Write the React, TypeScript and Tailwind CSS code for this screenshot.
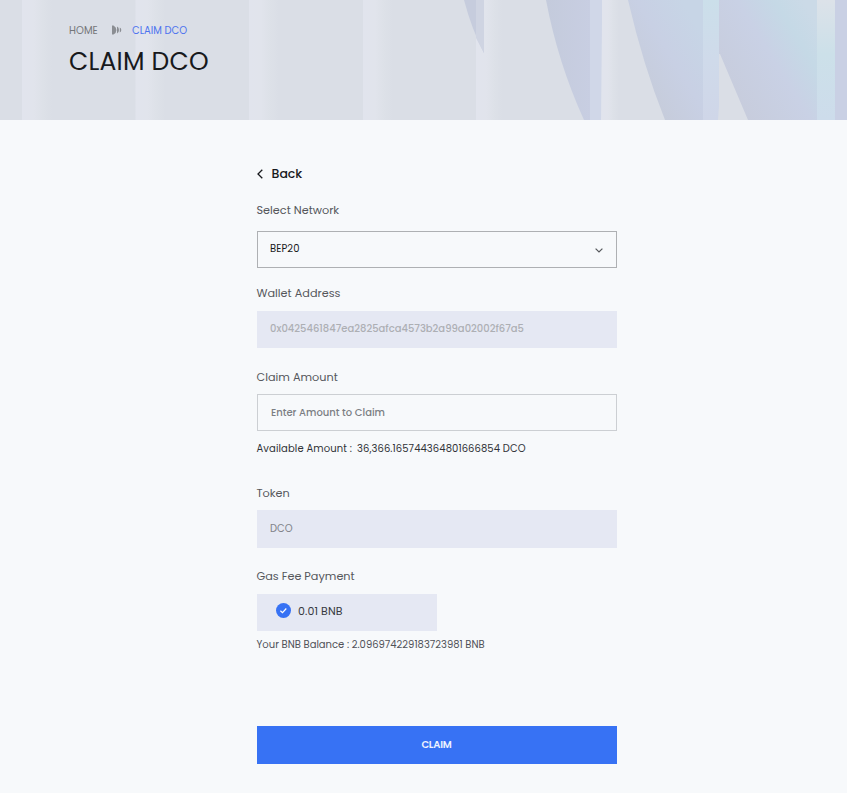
import React from "react";

const stripes = [22, 135.5, 249, 363];

function Backdrop() {
  return (
    <svg className="absolute inset-0 h-full w-full" viewBox="0 0 847 120" preserveAspectRatio="none" aria-hidden="true">
      <defs>
        <linearGradient id="stripe">
          <stop offset="0" stopColor="#e1e4ed" />
          <stop offset="0.4" stopColor="#e1e4ec" />
          <stop offset="0.7" stopColor="#dde1e8" />
          <stop offset="1" stopColor="#dadee6" />
        </linearGradient>
        <linearGradient id="fin1"><stop offset="0" stopColor="#c4cbdc" /><stop offset="1" stopColor="#c8cee2" /></linearGradient>
        <linearGradient id="fin2" gradientUnits="userSpaceOnUse" x1="640" y1="80" x2="706" y2="40">
          <stop offset="0" stopColor="#c6ccdb" /><stop offset="0.5" stopColor="#c8d0e4" /><stop offset="1" stopColor="#c7d5e6" />
        </linearGradient>
        <linearGradient id="fin3" gradientUnits="userSpaceOnUse" x1="725" y1="90" x2="822" y2="30">
          <stop offset="0" stopColor="#c7ccdc" /><stop offset="0.5" stopColor="#c9d1e5" /><stop offset="0.78" stopColor="#c5d9e6" /><stop offset="1" stopColor="#cbdae7" />
        </linearGradient>
        <linearGradient id="edge" x1="0" y1="0" x2="0" y2="1"><stop offset="0" stopColor="#cbdfea" /><stop offset="0.5" stopColor="#cfdaea" /><stop offset="1" stopColor="#cfd6e8" /></linearGradient>
        <linearGradient id="glow" x1="0" y1="0" x2="0" y2="1"><stop offset="0" stopColor="#dce2e9" /><stop offset="0.45" stopColor="#cce0e9" /><stop offset="1" stopColor="#cddceb" /></linearGradient>
      </defs>
      <rect width="847" height="120" fill="#dadee6" />
      {stripes.map((x) => <rect key={x} x={x} width="30" height="120" fill="url(#stripe)" />)}
      <rect x="476" width="26" height="120" fill="url(#stripe)" />
      <rect x="601" width="18" height="120" fill="url(#stripe)" />
      <path d="M464 0H484V53Q472 30 464 0Z" fill="#c6ccdd" />
      <path d="M476 0H484V53L476 38Z" fill="#cfd4e2" />
      <path d="M546 0H591V120H584Q558 63 546 0Z" fill="url(#fin1)" />
      <path d="M590 0H602V22L601 120H590Z" fill="#d0d7e8" />
      <path d="M628 0H705V120H665Q643 65 628 0Z" fill="url(#fin2)" />
      <path d="M703 0H719V106L718 120H703Z" fill="url(#edge)" />
      <path d="M719 0H820V120H748L720 54L719 54Z" fill="url(#fin3)" />
      <path d="M817 0H836V120H817Z" fill="url(#glow)" />
      <path d="M835 0H847V120H835Z" fill="#c9d0e4" />
    </svg>
  );
}

function Label({ children, className }: { children: React.ReactNode; className: string }) {
  return <label className={`-ml-[0.5px] block h-5 whitespace-nowrap text-[11.25px] leading-5 text-[#55575b] ${className}`}>{children}</label>;
}

export default function App() {
  return (
    <div className="h-[793px] w-full overflow-hidden bg-[#f7f9fb] font-['Poppins','Inter',sans-serif] text-[#17191c]">
      <header className="relative h-[120px] overflow-hidden">
        <Backdrop />
        <div className="relative pl-[69px] pt-[23px]">
          <nav className="flex h-4 items-center whitespace-nowrap text-[10px] leading-4">
            <span className="w-[43px] tracking-[0.05px] text-[#747679]">HOME</span>
            <svg className="-mt-[3px] mr-[10px]" width="10" height="10" viewBox="0 0 10 10" fill="#8b8e93">
              <path d="M0 0.5H1.5Q4.4 2 4.4 5T1.5 9.5H0ZM5 1.5Q7 2.4 7 5T5 8.5ZM7.8 2.5Q9.3 3.4 9.3 5T7.8 7.5Z" />
            </svg>
            <span className="text-[#4d73ef]">CLAIM DCO</span>
          </nav>
          <h1 className="mt-[5px] whitespace-nowrap text-[25px] leading-9 tracking-[0.2px]">CLAIM DCO</h1>
        </div>
      </header>

      <main className="ml-[257px] flex w-[360px] flex-col pt-[42px]">
        <button className="flex h-6 items-center text-left text-[12.5px] font-medium leading-6">
          <svg className="mr-[8.5px]" width="6" height="10" viewBox="0 0 6 10" fill="none" stroke="currentColor" strokeWidth="1.3"><path d="M5.3 0.7L1 5L5.3 9.3" /></svg>
          <span>Back</span>
        </button>

        <Label className="mt-[14px]">Select Network</Label>
        <div className="mt-[11px] flex h-[37px] items-center justify-between border border-[#aeb0b3] pl-3 pr-[13px] text-[10px]">
          <span className="-mt-[2px] tracking-[0.1px]">BEP20</span>
          <svg className="mt-[2px]" width="8" height="5" viewBox="0 0 8 5" fill="none" stroke="#56585c" strokeWidth="1.2"><path d="M0.6 0.6L4 4L7.4 0.6" /></svg>
        </div>

        <Label className="mt-[15px]">Wallet Address</Label>
        <div className="mt-2 flex h-[37px] items-center whitespace-nowrap bg-[#e5e8f3] pl-[13px] text-[10px] font-medium text-[#adafb4]">
          <span className="-mt-[2px]">0x0425461847ea2825afca4573b2a99a02002f67a5</span>
        </div>

        <Label className="mt-[19px]">Claim Amount</Label>
        <input
          aria-label="Claim Amount"
          placeholder="Enter Amount to Claim"
          className="mt-[7px] h-[37px] w-full border border-[#cccfd3] bg-transparent pl-[13px] text-[10px] font-medium placeholder:text-[#7b7e83] focus:outline-none"
        />
        <p className="-ml-[0.5px] mt-2 flex h-5 gap-[5px] whitespace-nowrap text-[10px] leading-5 text-[#303237]">
          <span className="tracking-[0.11px]">Available Amount :</span>
          <span className="tracking-[0.08px]">36,366.165744364801666854 DCO</span>
        </p>

        <Label className="mt-6">Token</Label>
        <div className="mt-[7px] flex h-[38px] items-center bg-[#e5e8f3] pl-[13px] text-[10px] text-[#808288]">
          <span className="-mt-[2px]">DCO</span>
        </div>

        <Label className="mt-[18px]">Gas Fee Payment</Label>
        <div className="mt-2 flex h-[37px] w-[180px] items-center bg-[#e5e8f3] pb-[3px] pl-[19px] text-[11px] text-[#373941]">
          <svg className="-mt-[1px] mr-[7px]" width="15" height="15" viewBox="0 0 15 15"><circle cx="7.5" cy="7.5" r="7.5" fill="#3772f4" /><path d="M4.4 7.8L6.5 9.7L10.3 5.5" fill="none" stroke="#fff" strokeWidth="1.2" /></svg>
          <span className="tracking-[0.1px]">0.01 BNB</span>
        </div>
        <p className="-ml-[0.5px] mt-1 h-5 whitespace-nowrap text-[10px] leading-5 text-[#505258]">Your BNB Balance : 2.096974229183723981 BNB</p>

        <button className="mt-[71px] h-[38px] bg-[#3772f4] pb-[2px] pr-[1px] text-[10px] font-semibold tracking-[-0.2px] text-[#eef3ff]">CLAIM</button>
      </main>
    </div>
  );
}
